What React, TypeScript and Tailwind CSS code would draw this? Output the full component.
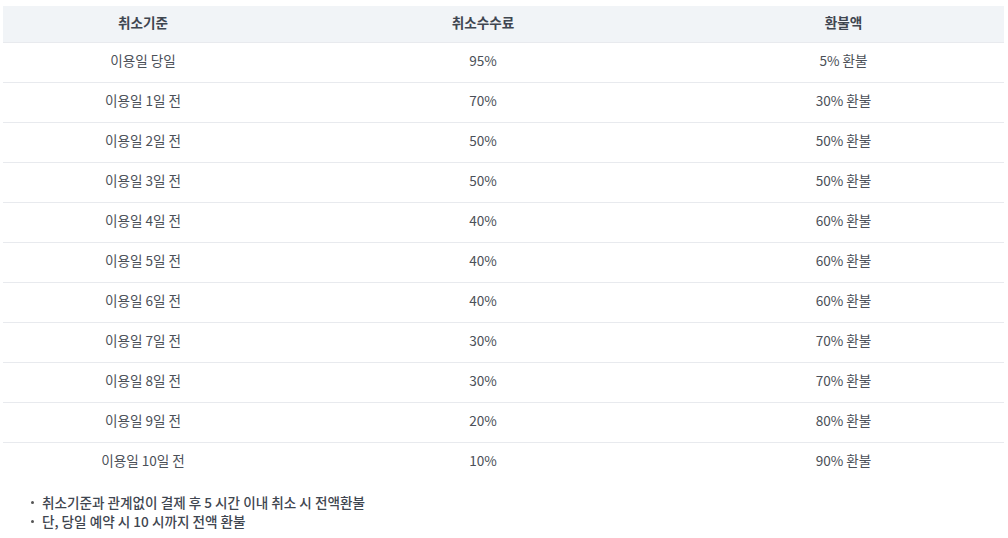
import React from "react";

const rows = [
  ["이용일 당일", "95%", "5% 환불"],
  ["이용일 1일 전", "70%", "30% 환불"],
  ["이용일 2일 전", "50%", "50% 환불"],
  ["이용일 3일 전", "50%", "50% 환불"],
  ["이용일 4일 전", "40%", "60% 환불"],
  ["이용일 5일 전", "40%", "60% 환불"],
  ["이용일 6일 전", "40%", "60% 환불"],
  ["이용일 7일 전", "30%", "70% 환불"],
  ["이용일 8일 전", "30%", "70% 환불"],
  ["이용일 9일 전", "20%", "80% 환불"],
  ["이용일 10일 전", "10%", "90% 환불"],
];

const App = () => {
  return (
    <div className="bg-white w-[1008px] h-[538px] pt-[6px] px-[3px] font-['Noto_Sans_CJK_KR','Noto_Sans',sans-serif] text-[13.6px]">
      {/* refund table */}
      <table className="w-[1001px] border-collapse table-fixed">
        <colgroup>
          <col className="w-[280px]" />
          <col className="w-[400px]" />
          <col className="w-[321px]" />
        </colgroup>
        <thead>
          <tr className="bg-[#f1f4f7] h-[36px] border-b border-[#e8eaee]">
            <th className="font-bold text-[#3f4650] text-center pb-[4px] leading-[20px]">취소기준</th>
            <th className="font-bold text-[#3f4650] text-center pb-[4px] leading-[20px]">취소수수료</th>
            <th className="font-bold text-[#3f4650] text-center pb-[4px] leading-[20px]">환불액</th>
          </tr>
        </thead>
        <tbody>
          {rows.map((r, i) => (
            <tr key={i} className="h-[40px] border-b border-[#e8eaee] last:border-b-0">
              {r.map((c, j) => (
                <td key={j} className="text-center text-[#4b5058] pb-[4px] leading-[20px]">
                  {c}
                </td>
              ))}
            </tr>
          ))}
        </tbody>
      </table>

      <ul className="mt-[11px] pl-[28px] text-[#3f4650] font-medium leading-[19px]">
        <li className="flex items-center gap-[8px]">
          <span className="w-[3px] h-[3px] rounded-full bg-[#555]" />
          취소기준과 관계없이 결제 후 5 시간 이내 취소 시 전액환불
        </li>
        <li className="flex items-center gap-[8px]">
          <span className="w-[3px] h-[3px] rounded-full bg-[#555]" />
          단, 당일 예약 시 10 시까지 전액 환불
        </li>
      </ul>
    </div>
  );
};

export default App;
